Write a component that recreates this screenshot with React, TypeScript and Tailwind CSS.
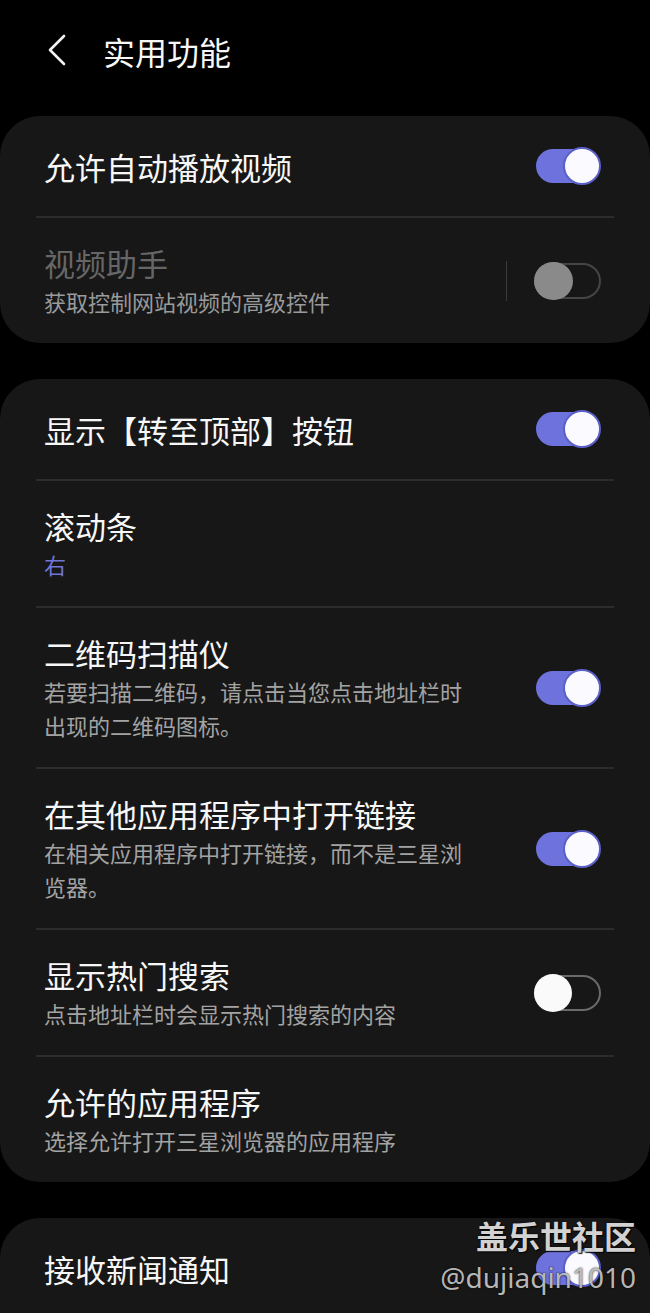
import React from "react";

const FONT = { fontFamily: '"Noto Sans CJK SC", "Noto Sans", sans-serif' };

function Toggle({ state }: { state: "on" | "off" | "disabled" }) {
  if (state === "on") {
    return (
      <div className="relative w-[66px] h-[38px] shrink-0">
        <div className="absolute left-[1px] top-[2px] w-[58px] h-[34px] rounded-full bg-[#6e72dd]" />
        <div className="absolute right-0 top-0 w-[38px] h-[38px] rounded-full bg-[#fbfbff] border-[2px] border-[#5b5fc8]" />
      </div>
    );
  }
  if (state === "off") {
    return (
      <div className="relative w-[67px] h-[38px] shrink-0">
        <div className="absolute left-0 top-[1px] w-[67px] h-[36px] rounded-full border-[2px] border-[#6a6a6a]" />
        <div className="absolute left-0 top-0 w-[38px] h-[38px] rounded-full bg-[#fafafa]" />
      </div>
    );
  }
  return (
    <div className="relative w-[67px] h-[38px] shrink-0">
      <div className="absolute left-0 top-[1px] w-[67px] h-[36px] rounded-full border-[2px] border-[#454545]" />
      <div className="absolute left-0 top-0 w-[39px] h-[38px] rounded-full bg-[#8a8a8a]" />
    </div>
  );
}

function Divider() {
  return <div className="mx-[36px] h-[2px] bg-[#2c2c2c]" />;
}

function Row({
  title,
  sub,
  subColor,
  toggle,
  disabled,
  sep,
  subWidth,
}: {
  title: string;
  sub?: string;
  subColor?: string;
  toggle?: "on" | "off" | "disabled";
  disabled?: boolean;
  sep?: boolean;
  subWidth?: string;
}) {
  return (
    <div className="flex items-center min-h-[100px] pl-[44px] pr-[49px] py-[25px]">
      <div className="flex-1 flex flex-col">
        <div
          className={`text-[31px] leading-[39px] ${disabled ? "text-[#666666]" : "text-[#f7f7f7]"}`}
        >
          {title}
        </div>
        {sub && (
          <div
            className={`mt-[2px] text-[22px] leading-[34px] ${subWidth ?? ""}`}
            style={{ color: subColor ?? "#a3a3a3" }}
          >
            {sub}
          </div>
        )}
      </div>
      {sep && <div className="w-[1px] h-[40px] bg-[#3a3a3a] mr-[27px]" />}
      {toggle && <Toggle state={toggle} />}
    </div>
  );
}

export default function App() {
  return (
    <div className="w-[650px] h-[1313px] bg-black overflow-hidden relative" style={FONT}>
      <div className="h-[116px] flex items-start pt-[33px] pl-[46px]">
        <svg width="22" height="34" viewBox="0 0 22 34" className="mt-[0px]">
          <polyline
            points="18,3 4,17 18,31"
            fill="none"
            stroke="#f2f2f2"
            strokeWidth="2.6"
            strokeLinecap="round"
            strokeLinejoin="round"
          />
        </svg>
        <div className="ml-[35px] text-[32px] leading-[36px] text-[#f7f7f7]">实用功能</div>
      </div>

      <div className="bg-[#171717] rounded-[40px]">
        <Row title="允许自动播放视频" toggle="on" />
        <Divider />
        <Row
          title="视频助手"
          sub="获取控制网站视频的高级控件"
          subColor="#9a9a9a"
          toggle="disabled"
          disabled
          sep
        />
      </div>

      <div className="mt-[36px] bg-[#171717] rounded-[40px]">
        <Row title="显示【转至顶部】按钮" toggle="on" />
        <Divider />
        <Row title="滚动条" sub="右" subColor="#7175d8" />
        <Divider />
        <Row
          title="二维码扫描仪"
          sub="若要扫描二维码，请点击当您点击地址栏时出现的二维码图标。"
          subWidth="w-[430px]"
          toggle="on"
        />
        <Divider />
        <Row
          title="在其他应用程序中打开链接"
          sub="在相关应用程序中打开链接，而不是三星浏览器。"
          subWidth="w-[430px]"
          toggle="on"
        />
        <Divider />
        <Row title="显示热门搜索" sub="点击地址栏时会显示热门搜索的内容" toggle="off" />
        <Divider />
        <Row title="允许的应用程序" sub="选择允许打开三星浏览器的应用程序" />
      </div>

      <div className="mt-[36px] bg-[#171717] rounded-t-[40px]">
        <Row title="接收新闻通知" toggle="on" />
      </div>

      <div className="absolute right-[14px] top-[1216px] flex flex-col items-end pointer-events-none">
        <div
          className="text-[32px] leading-[38px] font-bold text-[#d2d2d2]"
          style={{ textShadow: "0 0 2px #000, 1px 1px 1px #000" }}
        >
          盖乐世社区
        </div>
        <div
          className="text-[28px] leading-[38px] text-[#cfcfcf]/90 mt-[4px]"
          style={{ fontFamily: '"Noto Sans", "Open Sans", sans-serif', textShadow: "0 0 2px #000" }}
        >
          @dujiaqin1010
        </div>
      </div>
    </div>
  );
}
